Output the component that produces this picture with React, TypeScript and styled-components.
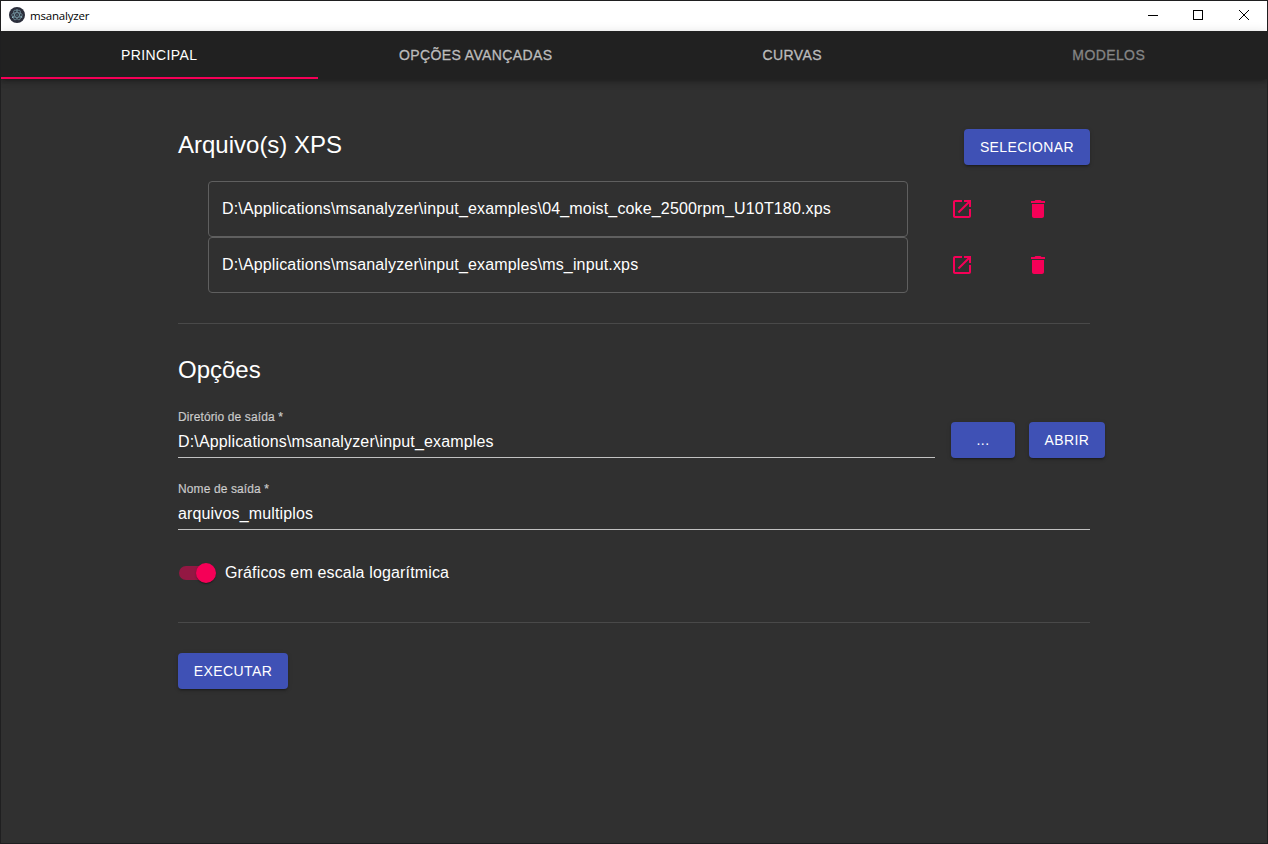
import React, { useState } from 'react';
import styled, { createGlobalStyle } from 'styled-components';

const GlobalStyle = createGlobalStyle`
  *, *::before, *::after { box-sizing: border-box; }
  body {
    margin: 0;
    background: #303030;
    color: #fff;
    font-family: "Liberation Sans", Arial, sans-serif;
    font-size: 16px;
  }
`;

const Window = styled.div`
  display: flex;
  flex-direction: column;
  height: 844px;
  border: 1px solid #1f1f20;
  background: #303030;
  overflow: hidden;
`;

const TitleBar = styled.header`
  display: flex;
  align-items: center;
  flex: none;
  height: 30px;
  padding: 0 0 2px 8px;
  background: #fff;
  color: #000;
`;

const Title = styled.span`
  flex: 1;
  padding: 2px 0 0 5px;
  font-family: "Open Sans", sans-serif;
  font-size: 11.5px;
  letter-spacing: -0.2px;
  line-height: 16px;
`;

const WindowButton = styled.button`
  display: grid;
  place-items: center;
  width: 46px;
  height: 28px;
  padding: 0;
  border: 0;
  background: none;
`;

const TabBar = styled.nav`
  display: grid;
  grid-template-columns: repeat(4, 1fr);
  flex: none;
  height: 48px;
  background: #212121;
  box-shadow: 0 2px 4px -1px rgba(0, 0, 0, 0.2), 0 4px 5px rgba(0, 0, 0, 0.14),
    0 1px 10px rgba(0, 0, 0, 0.12);
`;

const Tab = styled.button<{ $active?: boolean; $disabled?: boolean }>`
  padding: 0;
  border: 0;
  background: none;
  box-shadow: ${p => (p.$active ? 'inset 0 -2px #f50057' : 'none')};
  color: ${p => (p.$active ? '#fff' : p.$disabled ? '#858585' : '#bcbcbc')};
  font: 500 14px/24px "Liberation Sans", Arial, sans-serif;
  letter-spacing: 0.4px;
  text-transform: uppercase;
  -webkit-text-stroke: ${p => (p.$active ? '0' : '0.3px')};
`;

const Content = styled.main`
  width: 912px;
  margin: 50px auto 0;
`;

const SectionHeader = styled.div`
  display: flex;
  justify-content: space-between;
  height: 52px;
`;

const Heading = styled.h5`
  margin: 0;
  font-size: 24px;
  font-weight: 400;
  line-height: 32px;
`;

const Button = styled.button<{ $width: number }>`
  flex: none;
  width: ${p => p.$width}px;
  height: 36px;
  padding: 0;
  border: 0;
  border-radius: 4px;
  background: #3f51b5;
  color: #fff;
  font: 500 14px/24px "Liberation Sans", Arial, sans-serif;
  letter-spacing: 0.4px;
  text-transform: uppercase;
  box-shadow: 0 3px 1px -2px rgba(0, 0, 0, 0.2), 0 2px 2px rgba(0, 0, 0, 0.14),
    0 1px 5px rgba(0, 0, 0, 0.12);
`;

const FileRow = styled.div`
  display: flex;
  align-items: center;
  padding-left: 30px;
`;

const FilePath = styled.div`
  width: 700px;
  height: 56px;
  padding: 0 13px;
  border: 1px solid #5f5f5f;
  border-radius: 4px;
  letter-spacing: 0.15px;
  line-height: 54px;
`;

const IconButton = styled.button<{ $gap: number }>`
  display: flex;
  margin-left: ${p => p.$gap}px;
  padding: 0;
  border: 0;
  background: none;
  color: #f50057;
`;

const Divider = styled.hr`
  height: 1px;
  margin: 30px 0;
  border: 0;
  background: rgba(255, 255, 255, 0.12);
`;

const FieldRow = styled.div`
  display: flex;
  align-items: flex-end;
  width: 927px;
  margin-top: 24px;
`;

const Field = styled.label<{ $width: number; $top?: number }>`
  display: block;
  width: ${p => p.$width}px;
  height: 48px;
  margin-top: ${p => p.$top ?? 0}px;
  border-bottom: 1px solid #c1c1c1;
`;

const FieldLabel = styled.span`
  display: block;
  height: 15px;
  color: rgba(255, 255, 255, 0.7);
  font-size: 12px;
  letter-spacing: 0.11px;
  line-height: 15px;
  -webkit-text-stroke: 0.2px;
`;

const Input = styled.input`
  display: block;
  width: 100%;
  height: 32px;
  padding: 1px 0 0;
  border: 0;
  outline: 0;
  background: none;
  color: #fff;
  font: 16px "Liberation Sans", Arial, sans-serif;
  letter-spacing: 0.15px;
`;

const ButtonPair = styled.div`
  display: flex;
  gap: 14px;
  margin-left: 16px;
`;

const SwitchRow = styled.label`
  display: flex;
  align-items: center;
  height: 38px;
  margin-top: 24px;
  padding-left: 1px;
  letter-spacing: 0.15px;
`;

const Track = styled.span`
  display: flex;
  align-items: center;
  justify-content: flex-end;
  width: 34px;
  height: 14px;
  margin-right: 12px;
  border-radius: 7px;
  background: #931843;
`;

const Thumb = styled.span`
  flex: none;
  width: 20px;
  height: 20px;
  margin-right: -3px;
  border-radius: 50%;
  background: #f50057;
  box-shadow: 0 2px 1px -1px rgba(0, 0, 0, 0.2), 0 1px 1px rgba(0, 0, 0, 0.14),
    0 1px 3px rgba(0, 0, 0, 0.12);
`;

const AppIcon = () => (
  <svg width="16" height="16" viewBox="0 0 16 16" fill="none">
    <circle cx="8" cy="8" r="8" fill="#2b2e3b" />
    <g stroke="#9fcfda" strokeOpacity="0.65" strokeWidth="0.7">
      <ellipse cx="8" cy="8" rx="5.4" ry="2.3" />
      <ellipse cx="8" cy="8" rx="5.4" ry="2.3" transform="rotate(60 8 8)" />
      <ellipse cx="8" cy="8" rx="5.4" ry="2.3" transform="rotate(120 8 8)" />
    </g>
    <g fill="#9fcfda">
      <circle cx="8" cy="8" r="0.6" />
      <circle cx="3.6" cy="10.2" r="0.7" />
      <circle cx="12.6" cy="10" r="0.7" />
      <circle cx="8" cy="2.9" r="0.7" />
    </g>
  </svg>
);

const OpenIcon = () => (
  <svg width="24" height="24" viewBox="0 0 24 24" fill="currentColor">
    <path d="M19 19H5V5h7V3H5c-1.11 0-2 .9-2 2v14c0 1.1.89 2 2 2h14c1.1 0 2-.9 2-2v-7h-2v7zM14 3v2h3.59l-9.83 9.83 1.41 1.41L19 6.41V10h2V3h-7z" />
  </svg>
);

const DeleteIcon = () => (
  <svg width="24" height="24" viewBox="0 0 24 24" fill="currentColor">
    <path d="M6 19c0 1.1.9 2 2 2h8c1.1 0 2-.9 2-2V7H6v12zM19 4h-3.5l-1-1h-5l-1 1H5v2h14V4z" />
  </svg>
);

const files = [
  'D:\\Applications\\msanalyzer\\input_examples\\04_moist_coke_2500rpm_U10T180.xps',
  'D:\\Applications\\msanalyzer\\input_examples\\ms_input.xps',
];

export default function App() {
  const [directory, setDirectory] = useState('D:\\Applications\\msanalyzer\\input_examples');
  const [name, setName] = useState('arquivos_multiplos');

  return (
    <>
      <GlobalStyle />
      <Window>
        <TitleBar>
          <AppIcon />
          <Title>msanalyzer</Title>
          <WindowButton aria-label="Minimizar">
            <svg width="12" height="10" shapeRendering="crispEdges">
              <path d="M2 5.5h10" stroke="#000" />
            </svg>
          </WindowButton>
          <WindowButton aria-label="Maximizar">
            <svg width="10" height="10" shapeRendering="crispEdges">
              <rect x="0.5" y="0.5" width="9" height="9" fill="none" stroke="#000" />
            </svg>
          </WindowButton>
          <WindowButton aria-label="Fechar">
            <svg width="10" height="10">
              <path d="M0 0l10 10M10 0L0 10" stroke="#000" />
            </svg>
          </WindowButton>
        </TitleBar>
        <TabBar>
          <Tab $active>Principal</Tab>
          <Tab>Opções avançadas</Tab>
          <Tab>Curvas</Tab>
          <Tab $disabled>Modelos</Tab>
        </TabBar>
        <Content>
          <SectionHeader>
            <Heading>Arquivo(s) XPS</Heading>
            <Button $width={126}>Selecionar</Button>
          </SectionHeader>
          {files.map(file => (
            <FileRow key={file}>
              <FilePath>{file}</FilePath>
              <IconButton $gap={42} aria-label="Abrir arquivo"><OpenIcon /></IconButton>
              <IconButton $gap={52} aria-label="Remover arquivo"><DeleteIcon /></IconButton>
            </FileRow>
          ))}
          <Divider />
          <Heading>Opções</Heading>
          <FieldRow>
            <Field $width={757}>
              <FieldLabel>Diretório de saída *</FieldLabel>
              <Input value={directory} onChange={e => setDirectory(e.target.value)} />
            </Field>
            <ButtonPair>
              <Button $width={64}>...</Button>
              <Button $width={76}>Abrir</Button>
            </ButtonPair>
          </FieldRow>
          <Field $width={912} $top={24}>
            <FieldLabel>Nome de saída *</FieldLabel>
            <Input value={name} onChange={e => setName(e.target.value)} />
          </Field>
          <SwitchRow>
            <Track><Thumb /></Track>
            Gráficos em escala logarítmica
          </SwitchRow>
          <Divider />
          <Button $width={110}>Executar</Button>
        </Content>
      </Window>
    </>
  );
}
